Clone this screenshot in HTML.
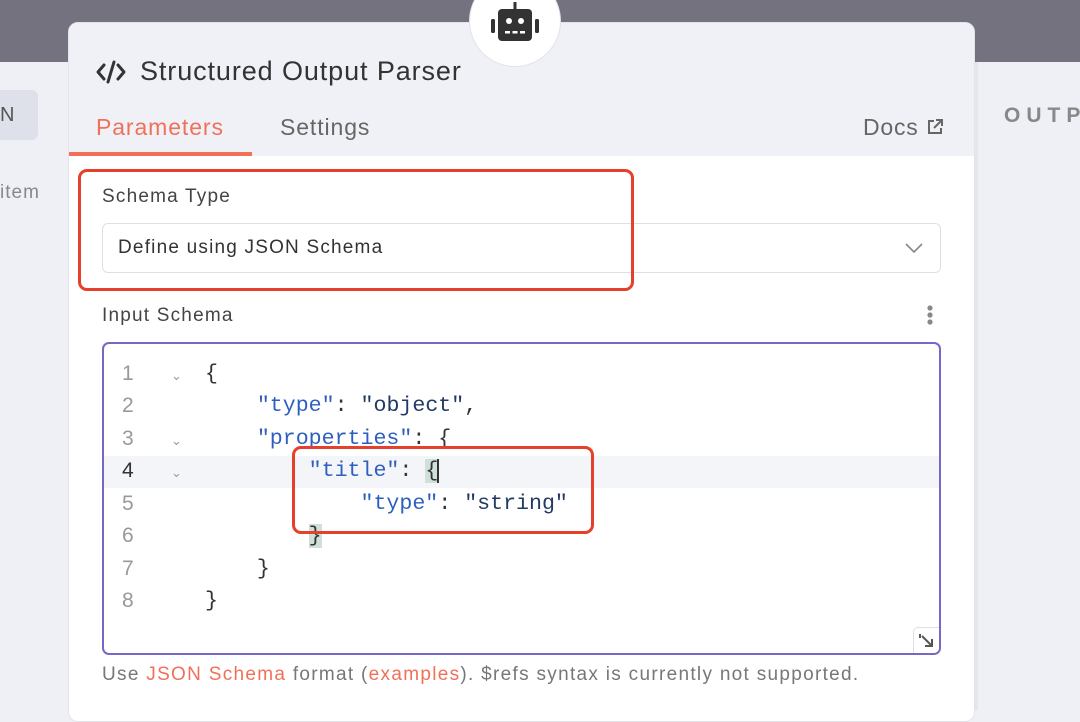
<!DOCTYPE html>
<html><head><meta charset="utf-8">
<style>
*{box-sizing:border-box;margin:0;padding:0}
body{width:1080px;height:710px;overflow:hidden;background:#eef0f6;font-family:"Liberation Sans",sans-serif;position:relative}
.top{position:absolute;left:0;top:0;width:1080px;height:62px;background:#74727e}
.leftbtn{position:absolute;left:-10px;top:90px;width:48px;height:50px;background:#dfe1ea;border-radius:6px;color:#555;font-size:20px;line-height:50px;padding-left:10px}
.item{position:absolute;left:0;top:182px;color:#888;font-size:19px;letter-spacing:1px}
.outp{position:absolute;left:1004px;top:104px;color:#888;font-size:21px;font-weight:bold;letter-spacing:6px}
.sep{position:absolute;left:975px;top:62px;width:3px;height:648px;background:#e4e6ee}
.panel{position:absolute;left:68px;top:22px;width:907px;height:700px;background:#fff;border-radius:10px;overflow:hidden;border:1px solid #e2e4ec}
.head{position:absolute;left:0;top:0;width:100%;height:133px;background:#f0f1f6}
.title{position:absolute;left:71px;top:33px;font-size:27px;letter-spacing:0.9px;color:#333}
.codeic{position:absolute;left:26px;top:37px}
.tab{position:absolute;top:91px;font-size:23px;letter-spacing:0.9px}
.ul{position:absolute;left:0;top:129px;width:183px;height:4px;background:#f0705a}
.docs{position:absolute;left:794px;top:91px;font-size:23px;color:#666;letter-spacing:0.8px}
.circle{position:absolute;left:469px;top:-25px;width:92px;height:92px;border-radius:50%;background:#fff;border:1px solid #e0e2ea}
.lbl{position:absolute;font-size:19px;color:#444;letter-spacing:1.2px}
.sel{position:absolute;left:102px;top:223px;width:839px;height:50px;border:1px solid #dcdfe8;border-radius:6px;padding-left:15px;line-height:48px;font-size:19px;color:#333;letter-spacing:1.2px}
.red{position:absolute;border:3.5px solid #e4402c;border-radius:9px}
.ed{position:absolute;left:102px;top:342px;width:839px;height:313px;border:2px solid #7767c7;border-radius:7px;background:#fff;overflow:hidden}
.hl{position:absolute;left:0;top:112px;width:100%;height:32px;background:#f4f5f8}
.ln{position:absolute;left:18px;width:20px;font-family:"Liberation Sans",sans-serif;font-size:21px;color:#999}
.fold{position:absolute;left:67px;font-size:13px;color:#999}
.code{position:absolute;left:101px;font-family:"Liberation Mono",monospace;font-size:21.6px;color:#333;white-space:pre}
.k{color:#2e5fbf}.s{color:#233a66}
.br{background:#cfe0d8}
.help{position:absolute;left:102px;top:664px;font-size:19px;color:#777;letter-spacing:1.3px}
.help span{color:#f0705a}
</style></head><body>
<div class="top"></div>
<div class="leftbtn">N</div>
<div class="item">item</div>
<div class="sep"></div>
<div class="outp">OUTP</div>
<div class="panel">
 <div class="head"></div>
 <svg class="codeic" width="32" height="24" viewBox="0 0 32 24"><path d="M9 5L3 12L9 19M23 5L29 12L23 19M19 2L13 22" fill="none" stroke="#333" stroke-width="3" stroke-linecap="round" stroke-linejoin="round"/></svg>
 <div class="title">Structured Output Parser</div>
 <div class="tab" style="left:27px;color:#f0705a">Parameters</div>
 <div class="tab" style="left:211px;color:#666">Settings</div>
 <div class="ul"></div>
 <div class="docs">Docs <svg width="18" height="18" viewBox="0 0 18 18" style="vertical-align:-1px"><path d="M8 3H3V15H15V10M10 2H16V8M16 2L8 10" fill="none" stroke="#666" stroke-width="2"/></svg></div>
</div>
<div class="circle"></div>
<svg style="position:absolute;left:490px;top:0px" width="50" height="42" viewBox="0 0 50 42">
 <rect x="23.5" y="2" width="3" height="8" fill="#333"/>
 <rect x="8" y="9" width="34" height="32" rx="4" fill="#333"/>
 <rect x="1" y="19" width="4" height="14" rx="1.5" fill="#333"/>
 <rect x="45" y="19" width="4" height="14" rx="1.5" fill="#333"/>
 <circle cx="19" cy="21" r="3" fill="#fff"/><circle cx="31" cy="21" r="3" fill="#fff"/>
 <rect x="15" y="31" width="5" height="2.5" fill="#fff"/><rect x="22.5" y="31" width="5" height="2.5" fill="#fff"/><rect x="30" y="31" width="5" height="2.5" fill="#fff"/>
</svg>
<div class="lbl" style="left:102px;top:186px">Schema Type</div>
<div class="sel">Define using JSON Schema
 <svg style="position:absolute;right:16px;top:18px" width="20" height="12" viewBox="0 0 20 12"><path d="M2 2L10 10L18 2" fill="none" stroke="#888" stroke-width="1.6"/></svg></div>
<div class="red" style="left:78px;top:169px;width:556px;height:122px"></div>
<div class="lbl" style="left:102px;top:305px">Input Schema</div>
<svg style="position:absolute;left:926px;top:304px" width="8" height="22"><circle cx="4" cy="4" r="2.6" fill="#888"/><circle cx="4" cy="11" r="2.6" fill="#888"/><circle cx="4" cy="18" r="2.6" fill="#888"/></svg>
<div class="ed">
 <div class="hl"></div>
 <div class="ln" style="top:18px">1</div><div class="ln" style="top:50px">2</div><div class="ln" style="top:83px">3</div><div class="ln" style="top:115px;color:#333">4</div><div class="ln" style="top:148px">5</div><div class="ln" style="top:180px">6</div><div class="ln" style="top:213px">7</div><div class="ln" style="top:245px">8</div>
 <div class="fold" style="top:24px">⌄</div><div class="fold" style="top:89px">⌄</div><div class="fold" style="top:121px">⌄</div>
 <div class="code" style="top:18px">{</div>
 <div class="code" style="top:50px">    <span class="k">"type"</span>: <span class="s">"object"</span>,</div>
 <div class="code" style="top:83px">    <span class="k">"properties"</span>: {</div>
 <div class="code" style="top:115px">        <span class="k">"title"</span>: <span class="br">{</span><span style="border-left:2px solid #333;margin-left:-1px"></span></div>
 <div class="code" style="top:148px">            <span class="k">"type"</span>: <span class="s">"string"</span></div>
 <div class="code" style="top:180px">        <span class="br">}</span></div>
 <div class="code" style="top:213px">    }</div>
 <div class="code" style="top:245px">}</div>
 <div style="position:absolute;right:-2px;bottom:-2px;width:28px;height:28px;border:1px solid #dcdfe8;border-radius:5px 0 0 0;background:#fff">
  <svg width="26" height="26" viewBox="0 0 26 26"><path d="M8 8L18 18M18 11V18H11M6 6V10" fill="none" stroke="#555" stroke-width="2"/></svg>
 </div>
</div>
<div class="red" style="left:292px;top:446px;width:302px;height:88px"></div>
<div class="help">Use <span>JSON Schema</span> format (<span>examples</span>). $refs syntax is currently not supported.</div>
</body></html>
